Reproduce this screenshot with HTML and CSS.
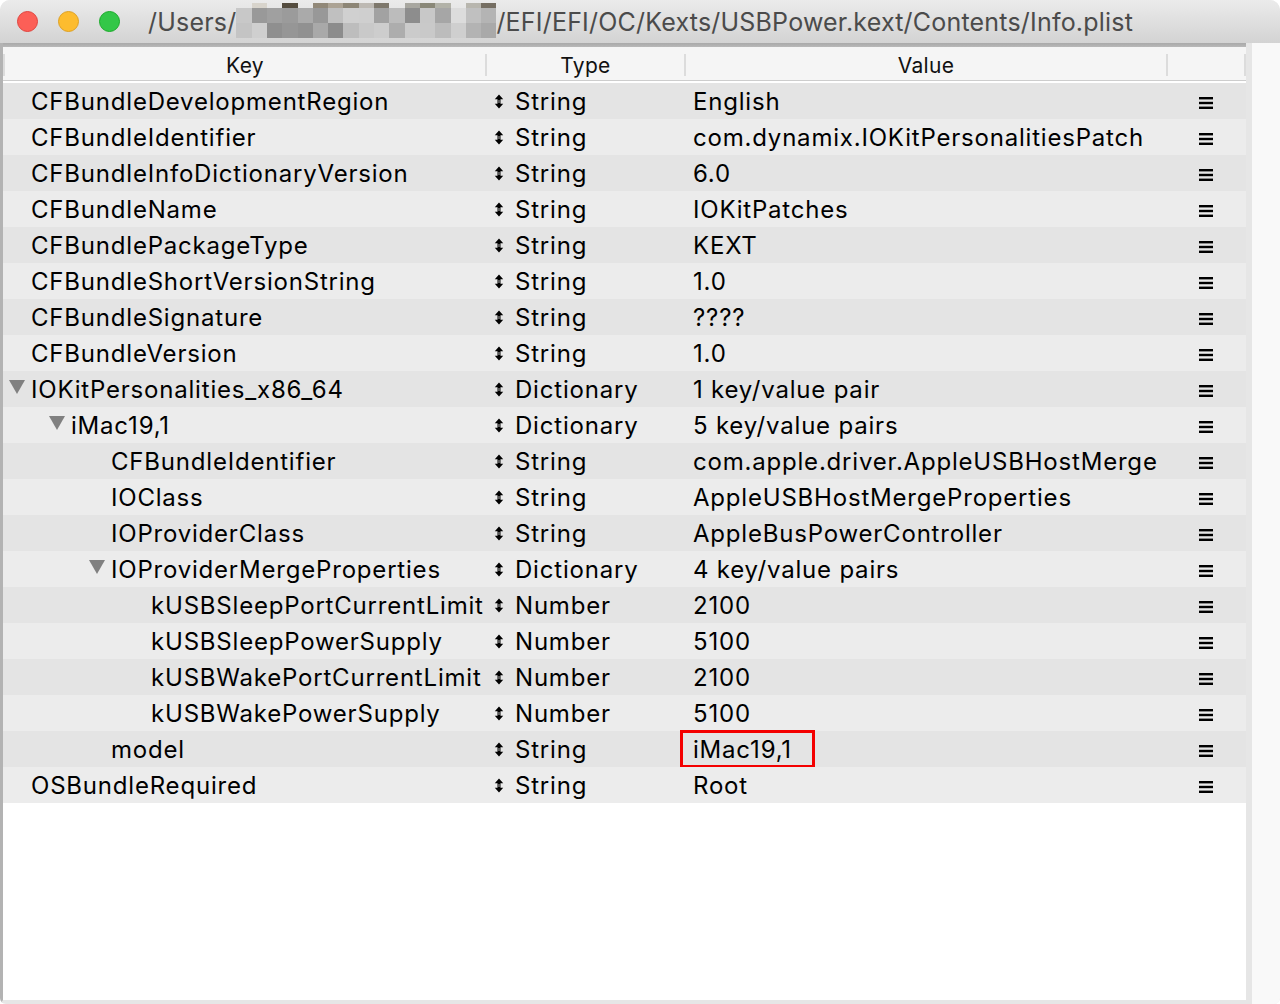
FILE: index.html
```html
<!DOCTYPE html>
<html>
<head>
<meta charset="utf-8">
<link rel="stylesheet" href="styles.css">
</head>
<body>
<div class="window">
  <div class="titlebar">
    <div class="lights">
      <span class="light red"></span>
      <span class="light yellow"></span>
      <span class="light green"></span>
    </div>
    <div class="title">
      <span class="title-text">/Users/</span>
      <div class="mosaic">
        <i class="t"></i><i class="t c1"></i><i class="t"></i><i class="t c2"></i><i class="t"></i><i class="t c3"></i><i class="t c4"></i><i class="t c5"></i><i class="t c6"></i><i class="t c7"></i><i class="t"></i><i class="t c8"></i><i class="t c9"></i><i class="t c10"></i><i class="t"></i><i class="t c11"></i><i class="t c12"></i>
        <i class="g200"></i><i class="g153"></i><i class="g160"></i><i class="g155"></i><i class="g170"></i><i class="g152"></i><i class="g192"></i><i class="g208"></i><i class="g207"></i><i class="g162"></i><i class="g188"></i><i class="g141"></i><i class="g200"></i><i class="g166"></i><i class="g220"></i><i class="g192"></i><i class="g180"></i>
        <i class="g196"></i><i class="g207"></i><i class="g143"></i><i class="g150"></i><i class="g145"></i><i class="g169"></i><i class="g140"></i><i class="g189"></i><i class="g201"></i><i class="g205"></i><i class="g173"></i><i class="g203"></i><i class="g201"></i><i class="g188"></i><i class="g207"></i><i class="g179"></i><i class="g169"></i>
      </div>
      <span class="title-text">/EFI/EFI/OC/Kexts/USBPower.kext/Contents/Info.plist</span>
    </div>
  </div>
  <div class="content">
    <div class="table">
      <div class="topband"></div>
      <div class="header">
        <div class="sep"></div>
        <div class="hcell">Key</div>
        <div class="sep"></div>
        <div class="hcell">Type</div>
        <div class="sep"></div>
        <div class="hcell">Value</div>
        <div class="sep"></div>
        <div class="hcell"></div>
        <div class="sep"></div>
      </div>
      <div class="rows">
        <div class="row"><div class="key l0">CFBundleDevelopmentRegion</div><div class="type"><svg class="ud" viewBox="0 0 10 16"><path d="M5 0.5 L9.5 5.5 L6.6 5.5 L6.6 10.5 L9.5 10.5 L5 15.5 L0.5 10.5 L3.4 10.5 L3.4 5.5 L0.5 5.5 Z M4.6 6.5 L4.6 9.5 L5.4 9.5 L5.4 6.5 Z" fill="#000" fill-rule="evenodd"/></svg>String</div><div class="value">English</div><div class="menu"><svg class="hb" viewBox="0 0 14 12"><rect y="0" width="14" height="2.4"/><rect y="4.8" width="14" height="2.4"/><rect y="9.6" width="14" height="2.4"/></svg></div></div>
        <div class="row"><div class="key l0">CFBundleIdentifier</div><div class="type"><svg class="ud" viewBox="0 0 10 16"><path d="M5 0.5 L9.5 5.5 L6.6 5.5 L6.6 10.5 L9.5 10.5 L5 15.5 L0.5 10.5 L3.4 10.5 L3.4 5.5 L0.5 5.5 Z M4.6 6.5 L4.6 9.5 L5.4 9.5 L5.4 6.5 Z" fill="#000" fill-rule="evenodd"/></svg>String</div><div class="value">com.dynamix.IOKitPersonalitiesPatch</div><div class="menu"><svg class="hb" viewBox="0 0 14 12"><rect y="0" width="14" height="2.4"/><rect y="4.8" width="14" height="2.4"/><rect y="9.6" width="14" height="2.4"/></svg></div></div>
        <div class="row"><div class="key l0">CFBundleInfoDictionaryVersion</div><div class="type"><svg class="ud" viewBox="0 0 10 16"><path d="M5 0.5 L9.5 5.5 L6.6 5.5 L6.6 10.5 L9.5 10.5 L5 15.5 L0.5 10.5 L3.4 10.5 L3.4 5.5 L0.5 5.5 Z M4.6 6.5 L4.6 9.5 L5.4 9.5 L5.4 6.5 Z" fill="#000" fill-rule="evenodd"/></svg>String</div><div class="value">6.0</div><div class="menu"><svg class="hb" viewBox="0 0 14 12"><rect y="0" width="14" height="2.4"/><rect y="4.8" width="14" height="2.4"/><rect y="9.6" width="14" height="2.4"/></svg></div></div>
        <div class="row"><div class="key l0">CFBundleName</div><div class="type"><svg class="ud" viewBox="0 0 10 16"><path d="M5 0.5 L9.5 5.5 L6.6 5.5 L6.6 10.5 L9.5 10.5 L5 15.5 L0.5 10.5 L3.4 10.5 L3.4 5.5 L0.5 5.5 Z M4.6 6.5 L4.6 9.5 L5.4 9.5 L5.4 6.5 Z" fill="#000" fill-rule="evenodd"/></svg>String</div><div class="value">IOKitPatches</div><div class="menu"><svg class="hb" viewBox="0 0 14 12"><rect y="0" width="14" height="2.4"/><rect y="4.8" width="14" height="2.4"/><rect y="9.6" width="14" height="2.4"/></svg></div></div>
        <div class="row"><div class="key l0">CFBundlePackageType</div><div class="type"><svg class="ud" viewBox="0 0 10 16"><path d="M5 0.5 L9.5 5.5 L6.6 5.5 L6.6 10.5 L9.5 10.5 L5 15.5 L0.5 10.5 L3.4 10.5 L3.4 5.5 L0.5 5.5 Z M4.6 6.5 L4.6 9.5 L5.4 9.5 L5.4 6.5 Z" fill="#000" fill-rule="evenodd"/></svg>String</div><div class="value">KEXT</div><div class="menu"><svg class="hb" viewBox="0 0 14 12"><rect y="0" width="14" height="2.4"/><rect y="4.8" width="14" height="2.4"/><rect y="9.6" width="14" height="2.4"/></svg></div></div>
        <div class="row"><div class="key l0">CFBundleShortVersionString</div><div class="type"><svg class="ud" viewBox="0 0 10 16"><path d="M5 0.5 L9.5 5.5 L6.6 5.5 L6.6 10.5 L9.5 10.5 L5 15.5 L0.5 10.5 L3.4 10.5 L3.4 5.5 L0.5 5.5 Z M4.6 6.5 L4.6 9.5 L5.4 9.5 L5.4 6.5 Z" fill="#000" fill-rule="evenodd"/></svg>String</div><div class="value">1.0</div><div class="menu"><svg class="hb" viewBox="0 0 14 12"><rect y="0" width="14" height="2.4"/><rect y="4.8" width="14" height="2.4"/><rect y="9.6" width="14" height="2.4"/></svg></div></div>
        <div class="row"><div class="key l0">CFBundleSignature</div><div class="type"><svg class="ud" viewBox="0 0 10 16"><path d="M5 0.5 L9.5 5.5 L6.6 5.5 L6.6 10.5 L9.5 10.5 L5 15.5 L0.5 10.5 L3.4 10.5 L3.4 5.5 L0.5 5.5 Z M4.6 6.5 L4.6 9.5 L5.4 9.5 L5.4 6.5 Z" fill="#000" fill-rule="evenodd"/></svg>String</div><div class="value">????</div><div class="menu"><svg class="hb" viewBox="0 0 14 12"><rect y="0" width="14" height="2.4"/><rect y="4.8" width="14" height="2.4"/><rect y="9.6" width="14" height="2.4"/></svg></div></div>
        <div class="row"><div class="key l0">CFBundleVersion</div><div class="type"><svg class="ud" viewBox="0 0 10 16"><path d="M5 0.5 L9.5 5.5 L6.6 5.5 L6.6 10.5 L9.5 10.5 L5 15.5 L0.5 10.5 L3.4 10.5 L3.4 5.5 L0.5 5.5 Z M4.6 6.5 L4.6 9.5 L5.4 9.5 L5.4 6.5 Z" fill="#000" fill-rule="evenodd"/></svg>String</div><div class="value">1.0</div><div class="menu"><svg class="hb" viewBox="0 0 14 12"><rect y="0" width="14" height="2.4"/><rect y="4.8" width="14" height="2.4"/><rect y="9.6" width="14" height="2.4"/></svg></div></div>
        <div class="row"><div class="key l0"><svg class="tri" viewBox="0 0 16 14"><path d="M0 0 H16 L8 14 Z" fill="#808080"/></svg>IOKitPersonalities_x86_64</div><div class="type"><svg class="ud" viewBox="0 0 10 16"><path d="M5 0.5 L9.5 5.5 L6.6 5.5 L6.6 10.5 L9.5 10.5 L5 15.5 L0.5 10.5 L3.4 10.5 L3.4 5.5 L0.5 5.5 Z M4.6 6.5 L4.6 9.5 L5.4 9.5 L5.4 6.5 Z" fill="#000" fill-rule="evenodd"/></svg>Dictionary</div><div class="value">1 key/value pair</div><div class="menu"><svg class="hb" viewBox="0 0 14 12"><rect y="0" width="14" height="2.4"/><rect y="4.8" width="14" height="2.4"/><rect y="9.6" width="14" height="2.4"/></svg></div></div>
        <div class="row"><div class="key l1"><svg class="tri" viewBox="0 0 16 14"><path d="M0 0 H16 L8 14 Z" fill="#808080"/></svg>iMac19,1</div><div class="type"><svg class="ud" viewBox="0 0 10 16"><path d="M5 0.5 L9.5 5.5 L6.6 5.5 L6.6 10.5 L9.5 10.5 L5 15.5 L0.5 10.5 L3.4 10.5 L3.4 5.5 L0.5 5.5 Z M4.6 6.5 L4.6 9.5 L5.4 9.5 L5.4 6.5 Z" fill="#000" fill-rule="evenodd"/></svg>Dictionary</div><div class="value">5 key/value pairs</div><div class="menu"><svg class="hb" viewBox="0 0 14 12"><rect y="0" width="14" height="2.4"/><rect y="4.8" width="14" height="2.4"/><rect y="9.6" width="14" height="2.4"/></svg></div></div>
        <div class="row"><div class="key l2">CFBundleIdentifier</div><div class="type"><svg class="ud" viewBox="0 0 10 16"><path d="M5 0.5 L9.5 5.5 L6.6 5.5 L6.6 10.5 L9.5 10.5 L5 15.5 L0.5 10.5 L3.4 10.5 L3.4 5.5 L0.5 5.5 Z M4.6 6.5 L4.6 9.5 L5.4 9.5 L5.4 6.5 Z" fill="#000" fill-rule="evenodd"/></svg>String</div><div class="value">com.apple.driver.AppleUSBHostMerge</div><div class="menu"><svg class="hb" viewBox="0 0 14 12"><rect y="0" width="14" height="2.4"/><rect y="4.8" width="14" height="2.4"/><rect y="9.6" width="14" height="2.4"/></svg></div></div>
        <div class="row"><div class="key l2">IOClass</div><div class="type"><svg class="ud" viewBox="0 0 10 16"><path d="M5 0.5 L9.5 5.5 L6.6 5.5 L6.6 10.5 L9.5 10.5 L5 15.5 L0.5 10.5 L3.4 10.5 L3.4 5.5 L0.5 5.5 Z M4.6 6.5 L4.6 9.5 L5.4 9.5 L5.4 6.5 Z" fill="#000" fill-rule="evenodd"/></svg>String</div><div class="value">AppleUSBHostMergeProperties</div><div class="menu"><svg class="hb" viewBox="0 0 14 12"><rect y="0" width="14" height="2.4"/><rect y="4.8" width="14" height="2.4"/><rect y="9.6" width="14" height="2.4"/></svg></div></div>
        <div class="row"><div class="key l2">IOProviderClass</div><div class="type"><svg class="ud" viewBox="0 0 10 16"><path d="M5 0.5 L9.5 5.5 L6.6 5.5 L6.6 10.5 L9.5 10.5 L5 15.5 L0.5 10.5 L3.4 10.5 L3.4 5.5 L0.5 5.5 Z M4.6 6.5 L4.6 9.5 L5.4 9.5 L5.4 6.5 Z" fill="#000" fill-rule="evenodd"/></svg>String</div><div class="value">AppleBusPowerController</div><div class="menu"><svg class="hb" viewBox="0 0 14 12"><rect y="0" width="14" height="2.4"/><rect y="4.8" width="14" height="2.4"/><rect y="9.6" width="14" height="2.4"/></svg></div></div>
        <div class="row"><div class="key l2"><svg class="tri" viewBox="0 0 16 14"><path d="M0 0 H16 L8 14 Z" fill="#808080"/></svg>IOProviderMergeProperties</div><div class="type"><svg class="ud" viewBox="0 0 10 16"><path d="M5 0.5 L9.5 5.5 L6.6 5.5 L6.6 10.5 L9.5 10.5 L5 15.5 L0.5 10.5 L3.4 10.5 L3.4 5.5 L0.5 5.5 Z M4.6 6.5 L4.6 9.5 L5.4 9.5 L5.4 6.5 Z" fill="#000" fill-rule="evenodd"/></svg>Dictionary</div><div class="value">4 key/value pairs</div><div class="menu"><svg class="hb" viewBox="0 0 14 12"><rect y="0" width="14" height="2.4"/><rect y="4.8" width="14" height="2.4"/><rect y="9.6" width="14" height="2.4"/></svg></div></div>
        <div class="row"><div class="key l3">kUSBSleepPortCurrentLimit</div><div class="type"><svg class="ud" viewBox="0 0 10 16"><path d="M5 0.5 L9.5 5.5 L6.6 5.5 L6.6 10.5 L9.5 10.5 L5 15.5 L0.5 10.5 L3.4 10.5 L3.4 5.5 L0.5 5.5 Z M4.6 6.5 L4.6 9.5 L5.4 9.5 L5.4 6.5 Z" fill="#000" fill-rule="evenodd"/></svg>Number</div><div class="value">2100</div><div class="menu"><svg class="hb" viewBox="0 0 14 12"><rect y="0" width="14" height="2.4"/><rect y="4.8" width="14" height="2.4"/><rect y="9.6" width="14" height="2.4"/></svg></div></div>
        <div class="row"><div class="key l3">kUSBSleepPowerSupply</div><div class="type"><svg class="ud" viewBox="0 0 10 16"><path d="M5 0.5 L9.5 5.5 L6.6 5.5 L6.6 10.5 L9.5 10.5 L5 15.5 L0.5 10.5 L3.4 10.5 L3.4 5.5 L0.5 5.5 Z M4.6 6.5 L4.6 9.5 L5.4 9.5 L5.4 6.5 Z" fill="#000" fill-rule="evenodd"/></svg>Number</div><div class="value">5100</div><div class="menu"><svg class="hb" viewBox="0 0 14 12"><rect y="0" width="14" height="2.4"/><rect y="4.8" width="14" height="2.4"/><rect y="9.6" width="14" height="2.4"/></svg></div></div>
        <div class="row"><div class="key l3">kUSBWakePortCurrentLimit</div><div class="type"><svg class="ud" viewBox="0 0 10 16"><path d="M5 0.5 L9.5 5.5 L6.6 5.5 L6.6 10.5 L9.5 10.5 L5 15.5 L0.5 10.5 L3.4 10.5 L3.4 5.5 L0.5 5.5 Z M4.6 6.5 L4.6 9.5 L5.4 9.5 L5.4 6.5 Z" fill="#000" fill-rule="evenodd"/></svg>Number</div><div class="value">2100</div><div class="menu"><svg class="hb" viewBox="0 0 14 12"><rect y="0" width="14" height="2.4"/><rect y="4.8" width="14" height="2.4"/><rect y="9.6" width="14" height="2.4"/></svg></div></div>
        <div class="row"><div class="key l3">kUSBWakePowerSupply</div><div class="type"><svg class="ud" viewBox="0 0 10 16"><path d="M5 0.5 L9.5 5.5 L6.6 5.5 L6.6 10.5 L9.5 10.5 L5 15.5 L0.5 10.5 L3.4 10.5 L3.4 5.5 L0.5 5.5 Z M4.6 6.5 L4.6 9.5 L5.4 9.5 L5.4 6.5 Z" fill="#000" fill-rule="evenodd"/></svg>Number</div><div class="value">5100</div><div class="menu"><svg class="hb" viewBox="0 0 14 12"><rect y="0" width="14" height="2.4"/><rect y="4.8" width="14" height="2.4"/><rect y="9.6" width="14" height="2.4"/></svg></div></div>
        <div class="row"><div class="key l2">model</div><div class="type"><svg class="ud" viewBox="0 0 10 16"><path d="M5 0.5 L9.5 5.5 L6.6 5.5 L6.6 10.5 L9.5 10.5 L5 15.5 L0.5 10.5 L3.4 10.5 L3.4 5.5 L0.5 5.5 Z M4.6 6.5 L4.6 9.5 L5.4 9.5 L5.4 6.5 Z" fill="#000" fill-rule="evenodd"/></svg>String</div><div class="value"><span class="highlight">iMac19,1</span></div><div class="menu"><svg class="hb" viewBox="0 0 14 12"><rect y="0" width="14" height="2.4"/><rect y="4.8" width="14" height="2.4"/><rect y="9.6" width="14" height="2.4"/></svg></div></div>
        <div class="row"><div class="key l0">OSBundleRequired</div><div class="type"><svg class="ud" viewBox="0 0 10 16"><path d="M5 0.5 L9.5 5.5 L6.6 5.5 L6.6 10.5 L9.5 10.5 L5 15.5 L0.5 10.5 L3.4 10.5 L3.4 5.5 L0.5 5.5 Z M4.6 6.5 L4.6 9.5 L5.4 9.5 L5.4 6.5 Z" fill="#000" fill-rule="evenodd"/></svg>String</div><div class="value">Root</div><div class="menu"><svg class="hb" viewBox="0 0 14 12"><rect y="0" width="14" height="2.4"/><rect y="4.8" width="14" height="2.4"/><rect y="9.6" width="14" height="2.4"/></svg></div></div>
      </div>
      <div class="empty"></div>
    </div>
    <div class="side"></div>
  </div>
</div>
</body>
</html>
```
FILE: styles.css
```css
html, body {
  margin: 0;
  padding: 0;
  background: #ffffff;
}
body {
  width: 1280px;
  height: 1004px;
  overflow: hidden;
  font-family: "Inter", "Roboto", "Liberation Sans", sans-serif;
  color: #000;
}
.window {
  width: 1280px;
  height: 1004px;
  display: flex;
  flex-direction: column;
  background: #ececec;
  border-radius: 10px 10px 6px 6px;
  overflow: hidden;
}
.titlebar {
  height: 43px;
  flex: none;
  display: flex;
  align-items: center;
  background: linear-gradient(#ebebeb, #d3d3d3);
}
.lights {
  display: flex;
  gap: 20px;
  padding-left: 17px;
  width: 113px;
  flex: none;
}
.light {
  width: 21px;
  height: 21px;
  border-radius: 50%;
  box-sizing: border-box;
}
.red { background: #fc5f57; border: 1px solid #e0443e; }
.yellow { background: #fdbc2e; border: 1px solid #dea123; }
.green { background: #33c748; border: 1px solid #1aab29; }
.title {
  display: flex;
  align-items: center;
  padding-left: 18px;
  height: 43px;
}
.title-text {
  font-size: 25px;
  color: #4b4b4b;
  letter-spacing: 0.2px;
  white-space: nowrap;
}
.mosaic {
  display: grid;
  grid-template-columns: repeat(17, 15.3px);
  grid-template-rows: 5px 15px 15px;
  align-self: flex-start;
  margin-top: 3px;
  width: 260px;
  flex: none;
}
.mosaic i { display: block; }
.t { background: transparent; }
.c1 { background: #d8d4cc; }
.c2 { background: #544c3e; }
.c3 { background: #918878; }
.c4 { background: #aca394; }
.c5 { background: #8d8676; }
.c6 { background: #bdb9b3; }
.c7 { background: #7e786c; }
.c8 { background: #a8a7a0; }
.c9 { background: #8a8878; }
.c10 { background: #b2b2a8; }
.c11 { background: #b8b6ae; }
.c12 { background: #756e62; }
.g140 { background: #8c8c8c; }
.g141 { background: #8d8d8d; }
.g143 { background: #8f8f8f; }
.g145 { background: #919191; }
.g150 { background: #969696; }
.g152 { background: #989898; }
.g153 { background: #999999; }
.g155 { background: #9b9b9b; }
.g160 { background: #a0a0a0; }
.g162 { background: #a2a2a2; }
.g166 { background: #a6a6a6; }
.g169 { background: #a9a9a9; }
.g170 { background: #aaaaaa; }
.g173 { background: #adadad; }
.g179 { background: #b3b3b3; }
.g180 { background: #b4b4b4; }
.g188 { background: #bcbcbc; }
.g189 { background: #bdbdbd; }
.g192 { background: #c0c0c0; }
.g196 { background: #c4c4c4; }
.g200 { background: #c8c8c8; }
.g201 { background: #c9c9c9; }
.g203 { background: #cbcbcb; }
.g205 { background: #cdcdcd; }
.g207 { background: #cfcfcf; }
.g208 { background: #d0d0d0; }
.g220 { background: #dcdcdc; }

.content {
  flex: 1;
  display: flex;
  min-height: 0;
}
.table {
  width: 1243px;
  flex: none;
  display: flex;
  flex-direction: column;
  border-left: 3px solid #b3b3b3;
  background: #ffffff;
  border-bottom: 4px solid #e6e6e6;
}
.topband {
  height: 4px;
  background: linear-gradient(#a9a9a9, #b8b8b8);
  flex: none;
}
.header {
  height: 34px;
  box-sizing: border-box;
  padding-top: 3px;
  flex: none;
  display: grid;
  grid-template-columns: 2px 480px 2px 197px 2px 480px 2px 76px 2px;
  align-items: center;
  background: #f5f5f5;
  border-bottom: 1px solid #cdcdcd;
  margin-bottom: 2px;
  font-size: 21px;
  letter-spacing: 0.3px;
}
.sep {
  height: 22px;
  background: #dcdcdc;
}
.hcell {
  text-align: center;
  color: #111;
}
.rows {
  display: flex;
  flex-direction: column;
}
.row {
  height: 36px;
  display: grid;
  grid-template-columns: 482px 199px 482px 80px;
  align-items: center;
  font-size: 24px;
  letter-spacing: 0.8px;
  background: #e4e4e4;
}
.row:nth-child(even) {
  background: #ececec;
}
.key {
  display: flex;
  align-items: center;
  white-space: nowrap;
}
.key.l0 { padding-left: 28px; }
.key.l1 { padding-left: 68px; }
.key.l2 { padding-left: 108px; }
.key.l3 { padding-left: 148px; }
.tri {
  width: 16px;
  height: 14px;
  margin-left: -22px;
  margin-right: 6px;
  margin-top: -4px;
  flex: none;
}
.type {
  display: flex;
  align-items: center;
  padding-left: 9px;
  white-space: nowrap;
}
.ud {
  width: 10px;
  height: 15px;
  margin-right: 11px;
  flex: none;
}
.value {
  display: flex;
  align-items: center;
  padding-left: 9px;
  white-space: nowrap;
  height: 36px;
}
.highlight {
  display: flex;
  align-items: center;
  height: 38px;
  box-sizing: border-box;
  border: 3px solid #f40000;
  margin-left: -13px;
  padding: 0 20px 0 10px;
  margin-top: -1px;
  margin-bottom: -1px;
}
.menu {
  display: flex;
  justify-content: center;
  align-items: center;
  padding-top: 3px;
}
.hb {
  width: 14px;
  height: 12px;
  fill: #000;
}
.empty {
  flex: 1;
  background: #ffffff;
}
.side {
  flex: 1;
  background: #f9f9f9;
  border-left: 6px solid #e6e6e6;
}
```
